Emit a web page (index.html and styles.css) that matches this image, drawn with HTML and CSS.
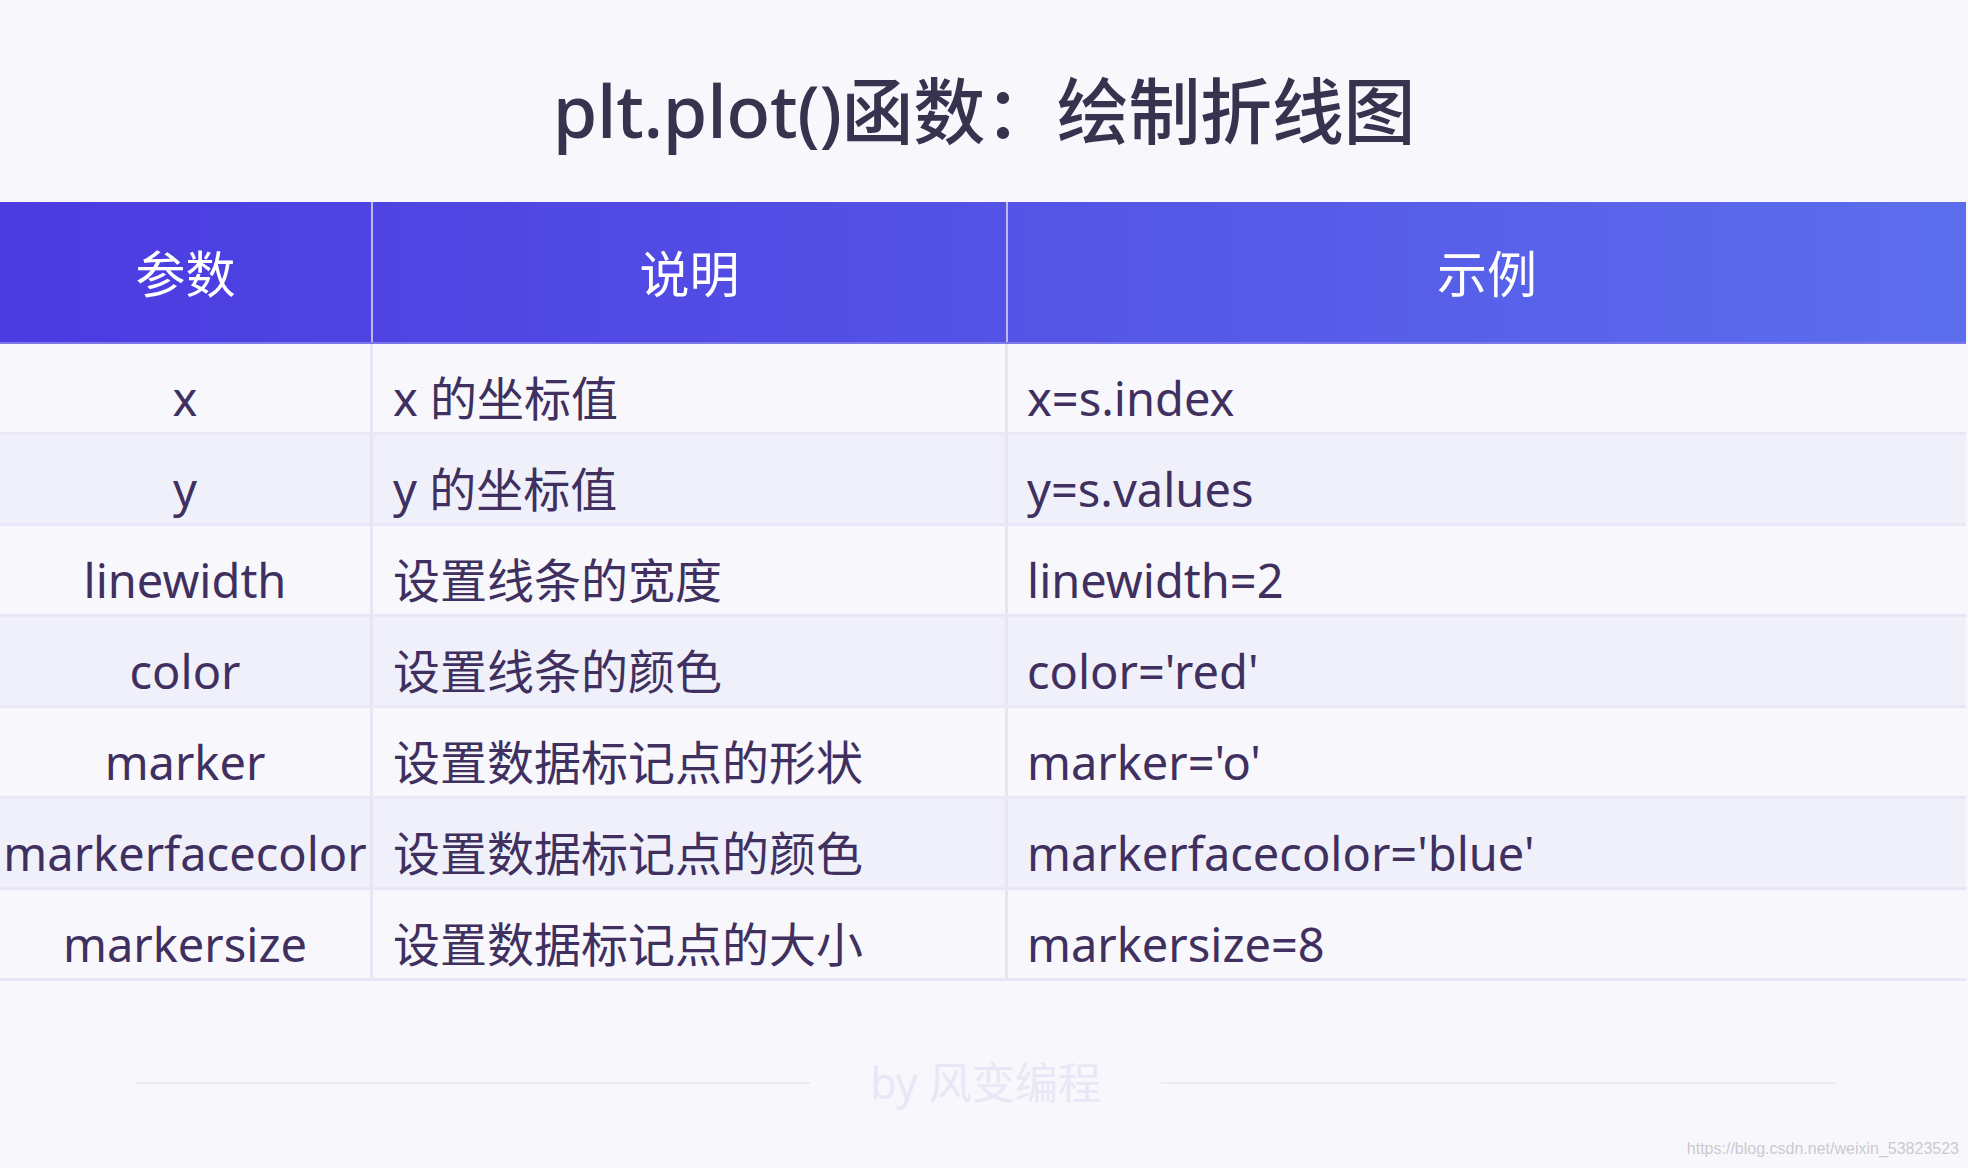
FILE: index.html
```html
<!DOCTYPE html>
<html lang="zh-CN">
<head>
<meta charset="utf-8">
<title>plt.plot()函数：绘制折线图</title>
<link rel="stylesheet" href="styles.css">
</head>
<body>
<div class="page">
  <header class="title-bar">
    <h1 class="title">plt.plot()函数：绘制折线图</h1>
  </header>
  <div class="table">
    <div class="row head">
      <div class="cell c1">参数</div>
      <div class="cell c2">说明</div>
      <div class="cell c3">示例</div>
    </div>
    <div class="row odd">
      <div class="cell c1">x</div>
      <div class="cell c2">x 的坐标值</div>
      <div class="cell c3">x=s.index</div>
    </div>
    <div class="row even">
      <div class="cell c1">y</div>
      <div class="cell c2">y 的坐标值</div>
      <div class="cell c3">y=s.values</div>
    </div>
    <div class="row odd">
      <div class="cell c1">linewidth</div>
      <div class="cell c2">设置线条的宽度</div>
      <div class="cell c3">linewidth=2</div>
    </div>
    <div class="row even">
      <div class="cell c1">color</div>
      <div class="cell c2">设置线条的颜色</div>
      <div class="cell c3">color='red'</div>
    </div>
    <div class="row odd">
      <div class="cell c1">marker</div>
      <div class="cell c2">设置数据标记点的形状</div>
      <div class="cell c3">marker='o'</div>
    </div>
    <div class="row even">
      <div class="cell c1">markerfacecolor</div>
      <div class="cell c2">设置数据标记点的颜色</div>
      <div class="cell c3">markerfacecolor='blue'</div>
    </div>
    <div class="row odd">
      <div class="cell c1">markersize</div>
      <div class="cell c2">设置数据标记点的大小</div>
      <div class="cell c3">markersize=8</div>
    </div>
  </div>
  <footer class="footer">
    <span class="rule"></span>
    <span class="brand">by 风变编程</span>
    <span class="rule"></span>
  </footer>
  <div class="watermark">https://blog.csdn.net/weixin_53823523</div>
</div>
</body>
</html>
```

FILE: styles.css
```css
html, body {
  margin: 0;
  padding: 0;
  background: #f7f7fc;
}

.page {
  position: relative;
  width: 1968px;
  height: 1168px;
  overflow: hidden;
  background: #f7f7fc;
  font-family: "Noto Sans", "Noto Sans CJK SC", sans-serif;
}

.title-bar {
  height: 202px;
  display: flex;
  justify-content: center;
  align-items: flex-start;
  box-sizing: border-box;
  padding-top: 70px;
}

.title {
  margin: 0;
  font-size: 72px;
  line-height: 80px;
  font-weight: 500;
  color: #37334f;
  letter-spacing: -0.3px;
}

.table {
  width: 1966px;
}

.row {
  display: grid;
  grid-template-columns: 373px 635px 958px;
  height: 91px;
  box-sizing: border-box;
  border-bottom: 3px solid #e9e7f5;
}

.row.odd { background: #f7f7fc; }
.row.even { background: #f0f0fa; }

.cell {
  box-sizing: border-box;
  display: flex;
  align-items: center;
  padding-top: 20px;
  font-size: 47px;
  line-height: 1;
  color: #40305f;
  white-space: nowrap;
}

.c1, .c2 {
  border-right: 3px solid #e7e5f4;
}

.c1 {
  justify-content: center;
}

.c2 {
  padding-left: 20px;
}

.c3 {
  padding-left: 19px;
}

.row.head {
  height: 142px;
  border-bottom: 2px solid #7d78ea;
  background: linear-gradient(90deg, #4b3be1 0%, #5350e5 45%, #5c6eed 100%);
}

.row.head .cell {
  justify-content: center;
  padding: 4px 0 0 0;
  color: #ffffff;
  font-size: 50px;
}

.row.head .c1,
.row.head .c2 {
  border-right: 2px solid #bdb9ee;
}

.footer {
  height: 189px;
  display: flex;
  align-items: center;
  gap: 60px;
  padding: 0 133px 0 136px;
  box-sizing: border-box;
}

.rule {
  flex: 1;
  height: 2px;
  background: #ebebf6;
  margin-top: 14px;
}

.brand {
  font-size: 43px;
  line-height: 1;
  color: #e8e7f5;
  white-space: nowrap;
  margin-top: 14px;
}

.watermark {
  position: absolute;
  right: 9px;
  bottom: 9px;
  font-family: "Liberation Sans", Arial, sans-serif;
  font-size: 16px;
  line-height: 20px;
  color: #c9c9ce;
  text-shadow: 0 0 1px #ffffff;
}
```
